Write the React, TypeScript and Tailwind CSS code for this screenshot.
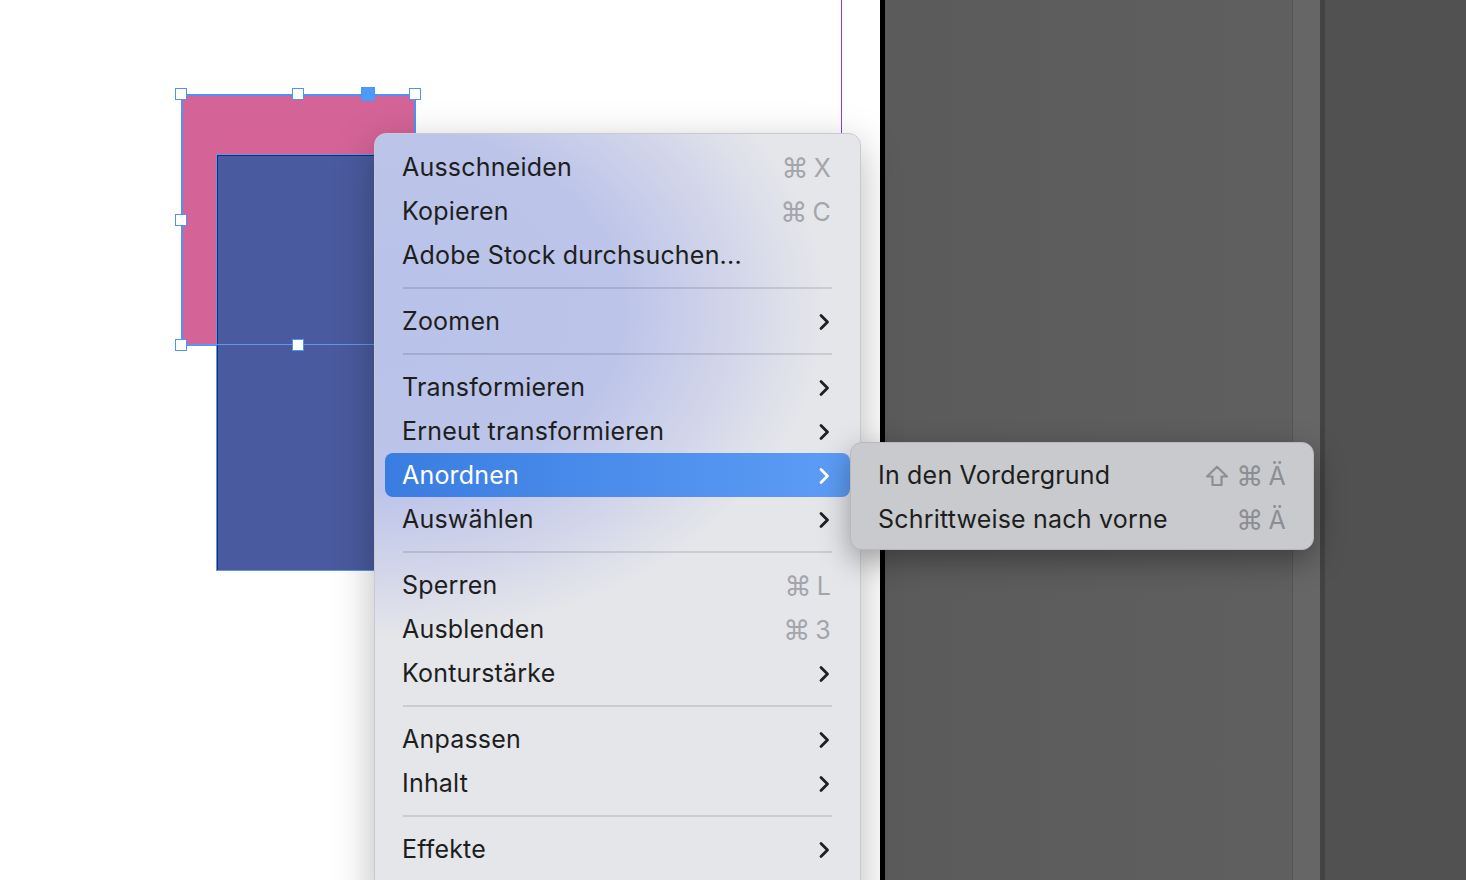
import React from "react";

type Item =
  | { kind: "item"; label: string; keys?: string[]; sub?: boolean; active?: boolean }
  | { kind: "sep" };

const items: Item[] = [
  { kind: "item", label: "Ausschneiden", keys: ["⌘", "X"] },
  { kind: "item", label: "Kopieren", keys: ["⌘", "C"] },
  { kind: "item", label: "Adobe Stock durchsuchen..." },
  { kind: "sep" },
  { kind: "item", label: "Zoomen", sub: true },
  { kind: "sep" },
  { kind: "item", label: "Transformieren", sub: true },
  { kind: "item", label: "Erneut transformieren", sub: true },
  { kind: "item", label: "Anordnen", sub: true, active: true },
  { kind: "item", label: "Auswählen", sub: true },
  { kind: "sep" },
  { kind: "item", label: "Sperren", keys: ["⌘", "L"] },
  { kind: "item", label: "Ausblenden", keys: ["⌘", "3"] },
  { kind: "item", label: "Konturstärke", sub: true },
  { kind: "sep" },
  { kind: "item", label: "Anpassen", sub: true },
  { kind: "item", label: "Inhalt", sub: true },
  { kind: "sep" },
  { kind: "item", label: "Effekte", sub: true },
];

function Chevron({ white }: { white?: boolean }) {
  return (
    <svg width="13" height="18" viewBox="0 0 13 18" className="shrink-0">
      <path
        d="M3 2.5 L9.5 9 L3 15.5"
        fill="none"
        stroke={white ? "#ffffff" : "#1f1f1f"}
        strokeWidth="2.8"
        strokeLinecap="round"
        strokeLinejoin="round"
      />
    </svg>
  );
}

// outlined shift arrow, as drawn in macOS menus
function ShiftIcon() {
  return (
    <svg width="24" height="22" viewBox="0 0 24 22" className="mr-[2px]">
      <path
        d="M12 1.8 L22 11.5 L16.5 11.5 L16.5 20 L7.5 20 L7.5 11.5 L2 11.5 Z"
        fill="none"
        stroke="currentColor"
        strokeWidth="2.2"
        strokeLinejoin="round"
      />
    </svg>
  );
}

function Keys({ keys, tone }: { keys: string[]; tone: string }) {
  return (
    <div className={`flex items-center gap-[5px] text-[25px] ${tone}`}>
      {keys.map((k, i) =>
        k === "⇧" ? (
          <ShiftIcon key={i} />
        ) : (
          <span
            key={i}
            className={
              k === "⌘"
                ? "font-['DejaVu_Sans',sans-serif] text-[27px] leading-none"
                : "leading-none"
            }
          >
            {k}
          </span>
        )
      )}
    </div>
  );
}

function Handle({ cls, filled }: { cls: string; filled?: boolean }) {
  return (
    <div
      className={`absolute border border-[#4f93f7] ${
        filled ? "bg-[#4f9af9]" : "bg-white"
      } ${cls}`}
    />
  );
}

export default function App() {
  return (
    <div className="relative flex h-[880px] w-[1466px] overflow-hidden font-['Inter',sans-serif]">
      {/* page canvas */}
      <div className="relative w-[880px] shrink-0 bg-white">
        <div className="absolute left-[841px] top-0 h-full w-px bg-[#8a3be6]" />

        {/* pink frame */}
        <div className="absolute left-[181px] top-[94px] h-[252px] w-[235px] border-2 border-[#4f93f7] bg-[#d46498]" />
        {/* blue frame */}
        <div className="absolute left-[216px] top-[154px] h-[417px] w-[200px] border border-[#5b98f5] bg-[#4a5a9e] shadow-[inset_1px_1px_0_#1e2b6b]" />
        {/* selection edge over blue frame */}
        <div className="absolute left-[181px] top-[344px] h-px w-[235px] bg-[#5b98f5]" />

        <Handle cls="left-[175px] top-[88px] h-[12px] w-[12px]" />
        <Handle cls="left-[292px] top-[88px] h-[12px] w-[12px]" />
        <Handle cls="left-[361px] top-[87px] h-[14px] w-[14px]" filled />
        <Handle cls="left-[409px] top-[88px] h-[12px] w-[12px]" />
        <Handle cls="left-[175px] top-[214px] h-[12px] w-[12px]" />
        <Handle cls="left-[175px] top-[339px] h-[12px] w-[12px]" />
        <Handle cls="left-[292px] top-[339px] h-[12px] w-[12px]" />
      </div>

      {/* dark app chrome */}
      <div className="w-[5px] shrink-0 bg-black" />
      <div className="w-[407px] shrink-0 bg-[linear-gradient(90deg,#5b5b5b,#5f5f5f)]" />
      <div className="w-[28px] shrink-0 border-l border-[#555] bg-[#666666]" />
      <div className="w-[5px] shrink-0 bg-[#434343]" />
      <div className="flex-1 bg-[#515151]" />

      {/* context menu */}
      <div className="absolute left-[374px] top-[133px] h-[780px] w-[487px] overflow-hidden rounded-[12px] border border-[#c9cad0] bg-[radial-gradient(ellipse_450px_330px_at_0px_175px,#b9c2e9_0%,#bcc4e9_55%,#d3d6ea_80%,#e5e6ea_100%)] shadow-[0_12px_40px_rgba(0,0,0,0.28)]">
        <div className="flex flex-col px-[10px] pt-[11px]">
          {items.map((it, i) =>
            it.kind === "sep" ? (
              <div key={i} className="flex h-[22px] items-center px-[18px]">
                <div className="h-[2px] w-full bg-black/[0.11]" />
              </div>
            ) : (
              <div
                key={i}
                className={`flex h-[44px] items-center justify-between rounded-[8px] pl-[17px] pr-[19px] pt-[2px] text-[25px] tracking-[0.2px] ${
                  it.active
                    ? "bg-[linear-gradient(90deg,#3a7de0,#5d9df6)] text-white"
                    : "text-[#1e1e1e]"
                }`}
              >
                <span>{it.label}</span>
                {it.keys && <Keys keys={it.keys} tone="text-[#a4a5aa]" />}
                {it.sub && <Chevron white={it.active} />}
              </div>
            )
          )}
        </div>
      </div>

      {/* submenu */}
      <div className="absolute left-[850px] top-[442px] h-[108px] w-[464px] rounded-[12px] border border-[#b8b9bd] bg-[#c9cacd] px-[10px] pt-[10px] shadow-[0_10px_30px_rgba(0,0,0,0.35)]">
        <div className="flex h-[44px] items-center justify-between pl-[17px] pr-[17px] pt-[2px] text-[25px] tracking-[0.2px] text-[#1e1e1e]">
          <span>In den Vordergrund</span>
          <Keys keys={["⇧", "⌘", "Ä"]} tone="text-[#8d8e93]" />
        </div>
        <div className="flex h-[44px] items-center justify-between pl-[17px] pr-[17px] pt-[2px] text-[25px] tracking-[0.2px] text-[#1e1e1e]">
          <span>Schrittweise nach vorne</span>
          <Keys keys={["⌘", "Ä"]} tone="text-[#8d8e93]" />
        </div>
      </div>
    </div>
  );
}
